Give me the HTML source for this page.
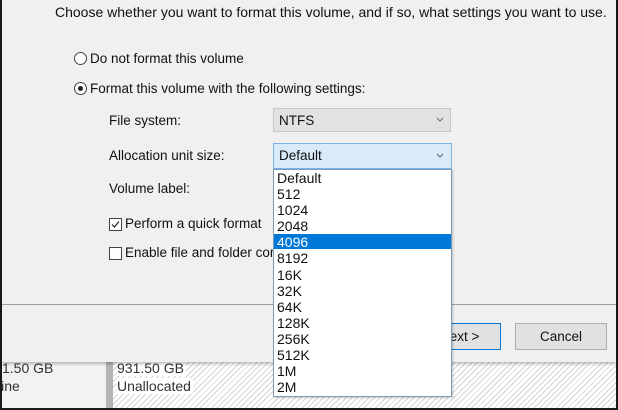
<!DOCTYPE html>
<html><head><style>
body{margin:0;width:618px;height:410px;overflow:hidden;background:#fff;font-family:"Liberation Sans",sans-serif;font-size:13.5px;color:#111;position:relative}
.abs{position:absolute}
.hatch{background:repeating-linear-gradient(135deg,#fff 0 3px,#d4d4d4 3px 4px)}
</style></head><body>
<div class="abs" style="left:0;top:0;width:618px;height:410px;background:#1a1a1a"></div>
<div class="abs" style="left:2px;top:360px;width:104px;height:48px;background:#f2f2f2"></div>
<div class="abs" style="left:106px;top:360px;width:7px;height:48px;background:#b4b4b4"></div>
<div class="abs hatch" style="left:113px;top:360px;width:503px;height:48px"></div>
<div class="abs" style="left:2px;top:360px;font-size:14px;color:#333">1.50 GB</div>
<div class="abs" style="left:-2px;top:378px;font-size:14px;color:#333">line</div>
<div class="abs" style="left:117px;top:360px;font-size:14px;color:#333;background:#fff;padding-right:2px">931.50 GB</div>
<div class="abs" style="left:117px;top:378px;font-size:14px;color:#333;background:#fff;padding-right:2px">Unallocated</div>
<div class="abs" style="left:2px;top:0;width:614px;height:362px;background:#f0f0f0;box-shadow:0 2px 3px rgba(0,0,0,.25)"></div>
<div class="abs" style="left:2px;top:304px;width:614px;height:1px;background:#a0a0a0"></div>
<div class="abs" style="left:55px;top:4px;font-size:14px">Choose whether you want to format this volume, and if so, what settings you want to use.</div>
<div class="abs" style="left:74px;top:52px;width:11px;height:11px;border:1px solid #444;border-radius:50%;background:#fff"></div>
<div class="abs" style="left:90px;top:51px">Do not format this volume</div>
<div class="abs" style="left:74px;top:82px;width:11px;height:11px;border:1px solid #444;border-radius:50%;background:#fff"></div>
<div class="abs" style="left:78px;top:86px;width:5px;height:5px;border-radius:50%;background:#222"></div>
<div class="abs" style="left:90px;top:81px">Format this volume with the following settings:</div>
<div class="abs" style="left:109px;top:113px">File system:</div>
<div class="abs" style="left:273px;top:108px;width:178px;height:24px;background:#e2e2e2;border:1px solid #c8c8c8;box-sizing:border-box"></div>
<div class="abs" style="left:279px;top:113px">NTFS</div>
<svg class="abs" style="left:436px;top:117px" width="8" height="5"><path d="M1 1 L4 4 L7 1" fill="none" stroke="#666" stroke-width="1"/></svg>
<div class="abs" style="left:109px;top:148px">Allocation unit size:</div>
<div class="abs" style="left:273px;top:143px;width:179px;height:26px;background:#d9ebf9;border:1px solid #7eb4ea;box-sizing:border-box"></div>
<div class="abs" style="left:279px;top:148px">Default</div>
<svg class="abs" style="left:436px;top:153px" width="8" height="5"><path d="M1 1 L4 4 L7 1" fill="none" stroke="#666" stroke-width="1"/></svg>
<div class="abs" style="left:109px;top:181px">Volume label:</div>
<div class="abs" style="left:109px;top:218px;width:11px;height:11px;border:1px solid #444;background:#fff"></div>
<svg class="abs" style="left:110px;top:219px" width="11" height="11"><path d="M2 5.5 L4.5 8 L9 2.5" fill="none" stroke="#222" stroke-width="1.2"/></svg>
<div class="abs" style="left:125px;top:216px">Perform a quick format</div>
<div class="abs" style="left:109px;top:247px;width:11px;height:11px;border:1px solid #444;background:#fff"></div>
<div class="abs" style="left:125px;top:245px">Enable file and folder compression</div>
<div class="abs" style="left:340px;top:323px;width:161px;height:27px;background:#e1e1e1;border:1px solid #0078d7;box-sizing:border-box"></div>
<div class="abs" style="left:440px;top:329px">Next &gt;</div>
<div class="abs" style="left:515px;top:323px;width:92px;height:27px;background:#e1e1e1;border:1px solid #adadad;box-sizing:border-box;text-align:center;line-height:25px">Cancel</div>
<div class="abs" style="left:273px;top:169px;width:179px;height:228px;background:#fff;border:1px solid #7a9cb8;box-sizing:border-box;box-shadow:1px 1px 2px rgba(0,0,0,.2)"></div>
<div class="abs" style="left:274px;top:234px;width:177px;height:15px;background:#0078d7"></div>
<div class="abs" style="left:277px;top:170px;line-height:16.1px;font-size:14px">
Default<br>512<br>1024<br>2048<br><span style="color:#fff">4096</span><br>8192<br>16K<br>32K<br>64K<br>128K<br>256K<br>512K<br>1M<br>2M</div>
</body></html>
